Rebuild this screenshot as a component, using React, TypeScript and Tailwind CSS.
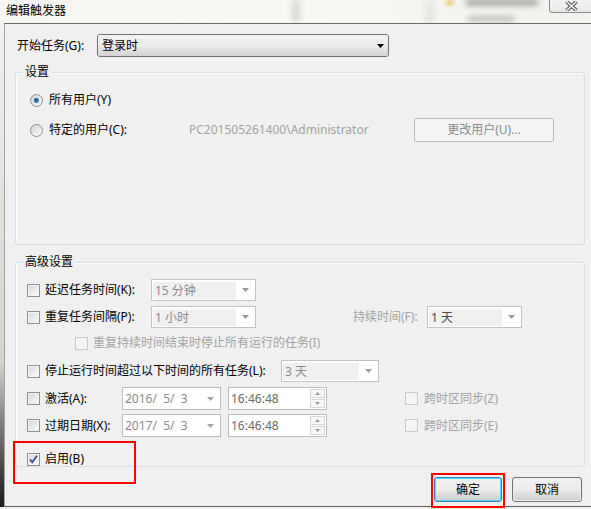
import React from 'react'

// Windows 7 风格的 "编辑触发器" 对话框

function Tri({ color = '#8d8d8d', w = 7, h = 4 }: { color?: string; w?: number; h?: number }) {
  return (
    <svg width={w} height={h} viewBox={`0 0 ${w} ${h}`} className="block">
      <path d={`M0 0 L${w} 0 L${w / 2} ${h} Z`} fill={color} />
    </svg>
  )
}

function Check({ checked = false, disabled = false }: { checked?: boolean; disabled?: boolean }) {
  if (disabled) {
    return <div className="w-[13px] h-[13px] shrink-0 border border-[#c9c9c9] bg-[#f4f4f4]" />
  }
  return (
    <div className="w-[13px] h-[13px] shrink-0 border border-[#8f8f8f] bg-gradient-to-br from-[#d6d6d6] to-[#fcfcfc] shadow-[inset_0_0_0_1px_#f4f4f4] flex items-center justify-center">
      {checked && (
        <svg width="9" height="9" viewBox="0 0 9 9">
          <path d="M1 4.5 L3.3 7.2 L8 0.8" stroke="#3d4f8c" strokeWidth="1.8" fill="none" />
        </svg>
      )}
    </div>
  )
}

function Radio({ checked = false }: { checked?: boolean }) {
  return (
    <div className="w-[13px] h-[13px] shrink-0 rounded-full border border-[#8f8f8f] bg-gradient-to-br from-[#d4d4d4] to-[#fafafa] flex items-center justify-center">
      {checked && <div className="w-[5px] h-[5px] rounded-full bg-gradient-to-br from-[#0a3f7a] to-[#47a3e6]" />}
    </div>
  )
}

function Combo({ value, w, dark = false }: { value: string; w: string; dark?: boolean }) {
  return (
    <div className={`${w} h-[22px] shrink-0 border border-[#c3c3c3] bg-white flex`}>
      <div
        className={`flex-1 mt-[2px] mb-[1px] ml-px bg-[#f0f0f0] pl-[2px] flex items-center leading-[16px] text-[12px] ${
          dark ? 'text-[#4c4c4c]' : 'text-[#8c8c8c]'
        }`}
      >
        {value}
      </div>
      <div className="w-[19px] flex items-center justify-center">
        <Tri color="#9a9a9a" />
      </div>
    </div>
  )
}

function DateBox({ value }: { value: string }) {
  return (
    <div className="w-[99px] h-[23px] shrink-0 border border-[#bdbdbd] bg-white flex items-center pl-[2px]">
      <span className="flex-1 whitespace-pre text-[12px] leading-[16px] text-[#8c8c8c]">{value}</span>
      <div className="w-[20px] flex justify-center">
        <Tri color="#a6a6a6" />
      </div>
    </div>
  )
}

function TimeBox({ value }: { value: string }) {
  return (
    <div className="w-[99px] h-[23px] shrink-0 border border-[#bdbdbd] bg-white flex items-center pl-[2px]">
      <span className="flex-1 text-[12px] leading-[16px] text-[#6a6a6a]">{value}</span>
      <div className="flex flex-col gap-px mr-px">
        <div className="w-[15px] h-[9px] border border-[#d6d6d6] bg-[#f6f6f6] flex items-center justify-center">
          <svg width="5" height="3" viewBox="0 0 5 3"><path d="M0 3 L5 3 L2.5 0 Z" fill="#9a9a9a" /></svg>
        </div>
        <div className="w-[15px] h-[9px] border border-[#d6d6d6] bg-[#f6f6f6] flex items-center justify-center">
          <svg width="5" height="3" viewBox="0 0 5 3"><path d="M0 0 L5 0 L2.5 3 Z" fill="#9a9a9a" /></svg>
        </div>
      </div>
    </div>
  )
}

function Group({ title, h, children }: { title: string; h: string; children: React.ReactNode }) {
  return (
    <div className={`relative ${h} w-[570px] border border-[#d5dfe5] rounded-[3px] shadow-[inset_1px_1px_0_#ffffff] pl-[6px]`}>
      <span className="absolute -top-[9px] left-[7px] px-[2px] bg-[#f0f0f0] leading-[16px] text-[12px] text-black">
        {title}
      </span>
      {children}
    </div>
  )
}

export default function App() {
  return (
    <div className="w-[591px] h-[509px] overflow-hidden relative bg-[#f4f2ee] font-['Noto_Sans','Noto_Sans_CJK_SC',sans-serif] text-[12px] text-black">
      {/* 标题栏 */}
      <div className="relative h-[23px] bg-gradient-to-r from-[#f7f5f1] via-[#f9f8f5] to-[#f3f1ec] overflow-hidden">
        <div className="absolute left-[292px] top-0 w-[8px] h-[23px] bg-[#d9d6d0] blur-[3px]" />
        <div className="absolute left-[425px] top-0 w-[10px] h-[23px] bg-[#e6e4e0] blur-[3px]" />
        <div className="absolute left-[446px] top-0 w-[8px] h-[5px] bg-[#e8c56a] blur-[2px]" />
        <div className="absolute left-[466px] top-0 w-[72px] h-[5px] bg-[#8d8b88] blur-[3px]" />
        <div className="absolute left-[468px] top-[17px] w-[46px] h-[4px] bg-[#a8a6a2] blur-[3px]" />
        <div className="absolute left-[6px] top-[2px] leading-[18px] text-[12px] text-black">编辑触发器</div>
        <div className="absolute left-[549px] -top-[4px] w-[44px] h-[17px] rounded-b-[3px] border border-[#8a8a8a] bg-gradient-to-b from-[#f6f6f6] to-[#e8e8e8] flex items-center justify-center pt-[3px]">
          <svg width="13" height="10" viewBox="0 0 13 10">
            <path d="M1.5 0.5 L11.5 9.5 M11.5 0.5 L1.5 9.5" stroke="#4c4c4c" strokeWidth="3.6" />
            <path d="M1.5 0.5 L11.5 9.5 M11.5 0.5 L1.5 9.5" stroke="#f2f2f2" strokeWidth="1.6" />
          </svg>
        </div>
      </div>

      <div className="flex h-[484px]">
        <div className="w-[4px] bg-gradient-to-b from-[#f2f0ec] via-[#d7d4cf] via-70% to-[#1d1d1d]" />
        <div className="flex-1 bg-[#f0f0f0] border-l border-t border-b border-l-[#a2a2a2] border-t-[#6b6b6b] border-b-[#5e5e5e] pl-[10px] pr-[6px]">
          {/* 开始任务 */}
          <div className="mt-[10px] h-[23px] flex items-center">
            <span className="ml-[2px] w-[80px] leading-[16px]">开始任务(G):</span>
            <div className="w-[292px] h-[23px] rounded-[3px] border border-[#707070] flex items-center relative overflow-hidden">
              <div className="absolute inset-0 bg-gradient-to-b from-[#f3f3f3] via-[#ebebeb] via-50% to-[#d3d3d3]" />
              <span className="relative pl-[4px] flex-1 leading-[16px]">登录时</span>
              <span className="relative mr-[4px]">
                <Tri color="#000" w={7} h={4} />
              </span>
            </div>
          </div>

          {/* 设置 */}
          <div className="mt-[15px]">
            <Group title="设置" h="h-[173px]">
              <div className="pt-[19px] h-[16px] box-content flex items-center">
                <div className="ml-[8px]"><Radio checked /></div>
                <span className="ml-[6px] leading-[16px]">所有用户(Y)</span>
              </div>
              <div className="mt-[10px] h-[24px] flex items-center">
                <div className="ml-[8px]"><Radio /></div>
                <span className="ml-[6px] w-[140px] leading-[16px]">特定的用户(C):</span>
                <span className="w-[225px] leading-[16px] text-[#a3a3a3]">PC201505261400\Administrator</span>
                <div className="w-[140px] h-[24px] rounded-[3px] border border-[#b7b9bb] bg-[#f4f4f4] flex items-center justify-center text-[#8a8a8a] leading-[16px]">
                  更改用户(U)...
                </div>
              </div>
            </Group>
          </div>

          {/* 高级设置 */}
          <div className="mt-[17px]">
            <Group title="高级设置" h="h-[205px]">
              <div className="mt-[16px] h-[22px] flex items-center">
                <div className="ml-[5px]"><Check /></div>
                <span className="ml-[5px] w-[106px] leading-[16px]">延迟任务时间(K):</span>
                <Combo value="15 分钟" w="w-[105px]" />
              </div>
              <div className="mt-[5px] h-[22px] flex items-center">
                <div className="ml-[5px]"><Check /></div>
                <span className="ml-[5px] w-[106px] leading-[16px]">重复任务间隔(P):</span>
                <Combo value="1 小时" w="w-[105px]" />
                <span className="ml-[97px] w-[74px] leading-[16px] text-[#a3a3a3]">持续时间(F):</span>
                <Combo value="1 天" w="w-[95px]" dark />
              </div>
              <div className="mt-[7px] h-[16px] flex items-center">
                <div className="ml-[53px]"><Check disabled /></div>
                <span className="ml-[5px] leading-[16px] text-[#a3a3a3]">重复持续时间结束时停止所有运行的任务(I)</span>
              </div>
              <div className="mt-[9px] h-[22px] flex items-center">
                <div className="ml-[5px]"><Check /></div>
                <span className="ml-[5px] w-[236px] leading-[16px]">停止运行时间超过以下时间的所有任务(L):</span>
                <Combo value="3 天" w="w-[98px]" />
              </div>
              <div className="mt-[5px] h-[23px] flex items-center">
                <div className="ml-[5px]"><Check /></div>
                <span className="ml-[5px] w-[77px] leading-[16px]">激活(A):</span>
                <DateBox value="2016/  5/  3" />
                <div className="ml-[7px]"><TimeBox value="16:46:48" /></div>
                <div className="ml-[78px]"><Check disabled /></div>
                <span className="ml-[6px] leading-[16px] text-[#a3a3a3]">跨时区同步(Z)</span>
              </div>
              <div className="mt-[4px] h-[23px] flex items-center">
                <div className="ml-[5px]"><Check /></div>
                <span className="ml-[5px] w-[77px] leading-[16px]">过期日期(X):</span>
                <DateBox value="2017/  5/  3" />
                <div className="ml-[7px]"><TimeBox value="16:46:48" /></div>
                <div className="ml-[78px]"><Check disabled /></div>
                <span className="ml-[6px] leading-[16px] text-[#a3a3a3]">跨时区同步(E)</span>
              </div>
              <div className="mt-[14px] h-[16px] flex items-center">
                <div className="ml-[5px]"><Check checked /></div>
                <span className="ml-[5px] leading-[16px]">启用(B)</span>
              </div>
            </Group>
          </div>

          {/* 按钮 */}
          <div className="mt-[10px] flex justify-end gap-[10px] pr-[3px]">
            <div className="relative w-[68px] h-[25px] rounded-[3px] border border-[#3c7fb1] shadow-[inset_0_0_0_1px_#48d8fb] flex items-center justify-center overflow-hidden">
              <div className="absolute inset-[1px] rounded-[2px] bg-gradient-to-b from-[#f2f2f2] via-[#ebebeb] via-50% to-[#cfcfcf]" />
              <span className="relative leading-[16px]">确定</span>
            </div>
            <div className="relative w-[70px] h-[25px] rounded-[3px] border border-[#707070] flex items-center justify-center overflow-hidden">
              <div className="absolute inset-[1px] rounded-[2px] bg-gradient-to-b from-[#f2f2f2] via-[#ebebeb] via-50% to-[#cfcfcf]" />
              <span className="relative leading-[16px]">取消</span>
            </div>
          </div>
        </div>
      </div>

      {/* 红色标注框 */}
      <div className="absolute left-[13px] top-[441px] w-[123px] h-[43px] border-2 border-[#ff0000]" />
      <div className="absolute left-[431px] top-[473px] w-[74px] h-[35px] border-2 border-[#ff0000]" />
    </div>
  )
}
